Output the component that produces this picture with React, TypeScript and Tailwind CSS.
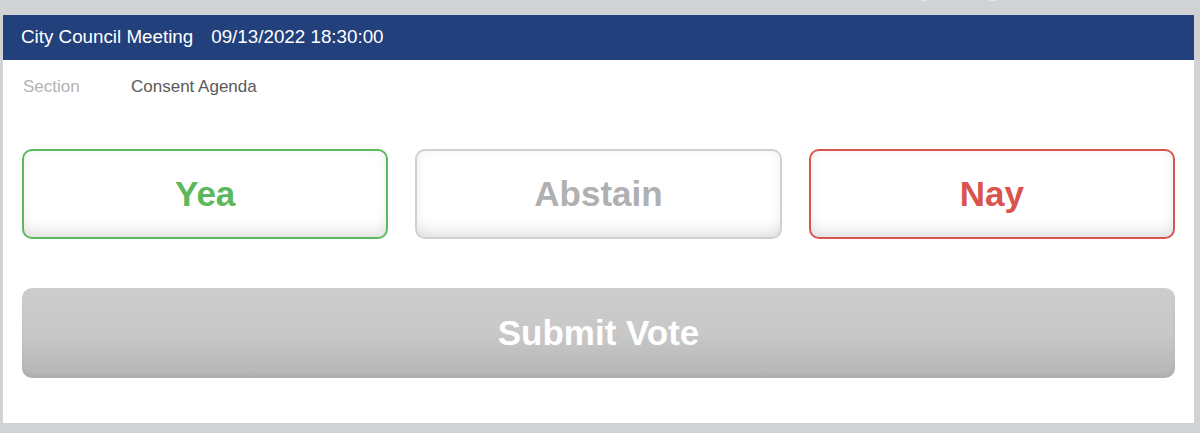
import React from "react";

export default function App() {
  const font = { fontFamily: '"Liberation Sans", Arial, sans-serif' };
  return (
    <div
      className="relative h-[433px] w-[1200px] bg-[#d1d2d4] pt-[15px] pl-[3px] pr-[6px] pb-[10px]"
      style={font}
    >
      <div className="absolute left-[921px] top-0 h-[1px] w-[6px] bg-[#e4e5e6]" />
      <div className="absolute left-[989px] top-0 h-[1px] w-[8px] bg-[#e4e5e6]" />
      <div className="flex h-[408px] flex-col bg-white">
        <div className="flex h-[45px] items-center bg-[#22407c] pl-[18px] text-[18.8px] text-white">
          <span>City Council Meeting</span>
          <span className="ml-[18px]">09/13/2022 18:30:00</span>
        </div>
        <div className="px-[19px]">
          <div className="mt-[17px] flex h-[20px] items-center pl-[1px] text-[17px]">
            <span className="w-[108px] text-[#b3b3b3]">Section</span>
            <span className="text-[#5a5a5a]">Consent Agenda</span>
          </div>
          <div className="mt-[52px] grid grid-cols-3 gap-[27px]">
            <button className="flex h-[90px] items-center justify-center rounded-[10px] border-2 border-[#5cb85c] bg-white text-[35px] font-bold text-[#5cb85c] shadow-[inset_0_-14px_16px_-8px_rgba(0,0,0,0.10),inset_0_0_12px_rgba(0,0,0,0.05)]">
              Yea
            </button>
            <button className="flex h-[90px] items-center justify-center rounded-[10px] border-2 border-[#d0d0d0] bg-white text-[35px] font-bold text-[#b0b0b0] shadow-[inset_0_-14px_16px_-8px_rgba(0,0,0,0.10),inset_0_0_12px_rgba(0,0,0,0.05)]">
              Abstain
            </button>
            <button className="flex h-[90px] items-center justify-center rounded-[10px] border-2 border-[#d9534f] bg-white text-[35px] font-bold text-[#d9534f] shadow-[inset_0_-14px_16px_-8px_rgba(0,0,0,0.10),inset_0_0_12px_rgba(0,0,0,0.05)]">
              Nay
            </button>
          </div>
          <button className="mt-[49px] flex h-[90px] w-full items-center justify-center rounded-[10px] bg-gradient-to-b from-[#cdcdcd] via-[#c8c8c8] to-[#b5b5b5] text-[35px] font-bold text-white shadow-[inset_0_-3px_4px_rgba(0,0,0,0.05)]">
            Submit Vote
          </button>
        </div>
      </div>
    </div>
  );
}
